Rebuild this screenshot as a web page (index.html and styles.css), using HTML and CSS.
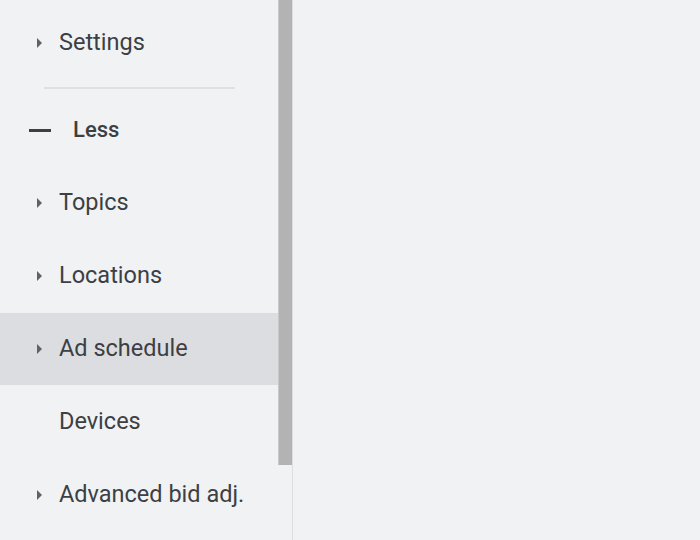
FILE: index.html
```html
<!DOCTYPE html>
<html>
<head>
<meta charset="utf-8">
<link rel="stylesheet" href="styles.css">
</head>
<body>
<div class="app">
  <nav class="sidebar">
    <div class="row"><span class="arrow"></span><span class="label">Settings</span></div>
    <div class="divider"></div>
    <div class="row less"><span class="dash"></span><span class="label">Less</span></div>
    <div class="row"><span class="arrow"></span><span class="label">Topics</span></div>
    <div class="row"><span class="arrow"></span><span class="label">Locations</span></div>
    <div class="row active"><span class="arrow"></span><span class="label">Ad schedule</span></div>
    <div class="row"><span class="noarrow"></span><span class="label">Devices</span></div>
    <div class="row"><span class="arrow"></span><span class="label">Advanced bid adj.</span></div>
  </nav>
  <div class="track"><div class="thumb"></div></div>
  <div class="rule"></div>
  <main class="main"></main>
</div>
</body>
</html>
```
FILE: styles.css
```css
html, body {
  margin: 0;
  padding: 0;
  background: #f1f2f4;
}
body {
  font-family: Roboto, "Liberation Sans", sans-serif;
  color: #3c4043;
}
.app {
  display: flex;
  width: 700px;
  height: 540px;
  overflow: hidden;
}
.sidebar {
  width: 278px;
  flex: none;
  padding-top: 7px;
}
.row {
  display: flex;
  align-items: center;
  height: 72px;
  margin-bottom: 1px;
  padding-left: 37px;
}
.row.active {
  background: #dcdde1;
}
.arrow, .noarrow {
  width: 22px;
  flex: none;
  display: block;
}
.arrow {
  height: 0;
  width: 0;
  border-top: 5px solid transparent;
  border-bottom: 5px solid transparent;
  border-left: 5px solid #5f6368;
  margin-right: 17px;
}
.label {
  font-size: 23.5px;
  line-height: 1;
}
.divider {
  height: 2px;
  background: #dfe0e3;
  margin: 8px 43px 5px 44px;
}
.less {
  padding-left: 29px;
}
.dash {
  width: 22px;
  height: 3px;
  background: #3c4043;
  margin-right: 22px;
  flex: none;
}
.less .label {
  font-weight: 500;
  font-size: 22px;
}
.track {
  width: 14px;
  flex: none;
}
.thumb {
  height: 465px;
  background: #b3b3b4;
  border-left: 1px solid #c9c9cb;
  box-sizing: border-box;
}
.rule {
  width: 1px;
  flex: none;
  background: #dddee1;
}
.main {
  flex: 1;
  background: #f1f2f4;
}
```
